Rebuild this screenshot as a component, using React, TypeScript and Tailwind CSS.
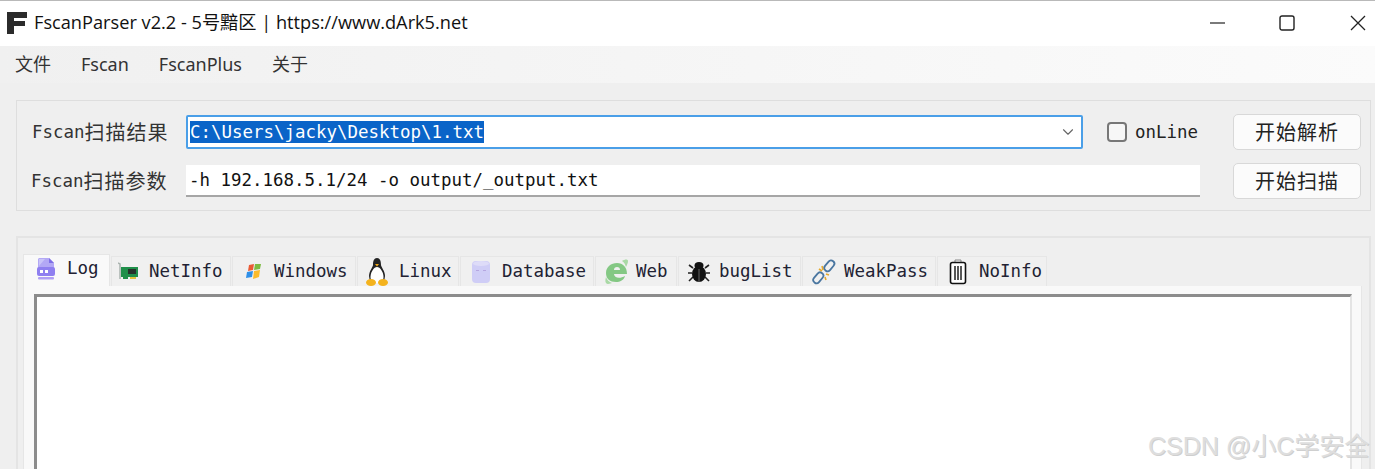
import type { ReactNode } from "react";
import { ChevronDown } from "lucide-react";

const mono = "font-['DejaVu_Sans_Mono','Noto_Sans_CJK_SC',monospace] text-[17.45px]";
const cjk = "font-['Noto_Sans_CJK_SC',sans-serif] text-[20px] tracking-[1px]";

function LogIcon() {
  return (
    <svg width="20" height="22" viewBox="0 0 20 22">
      <path d="M3 0h10l5 5v11H2V1z" fill="#b3a8f5" />
      <path d="M13 0l5 5h-5z" fill="#7f6fe6" />
      <path d="M3 1h6L3 8z" fill="#c9c4f8" />
      <rect x="1" y="9" width="18" height="9" rx="2" fill="#8f7ff0" />
      <rect x="4" y="12" width="3" height="3" fill="#fff" />
      <rect x="9" y="12" width="3" height="3" fill="#fff" />
      <rect x="2" y="19" width="16" height="2.5" rx="1" fill="#b09ff5" />
    </svg>
  );
}

function NetIcon() {
  return (
    <svg width="20" height="20" viewBox="0 0 20 20">
      <path d="M0 1l2 1v15" stroke="#a9b2ae" strokeWidth="1.5" fill="none" />
      <rect x="3" y="5" width="17" height="10" fill="#1f8f4a" />
      <rect x="10" y="7" width="8" height="5" fill="#26332c" />
      <rect x="5" y="15" width="5" height="2" fill="#1f8f4a" />
      <rect x="12" y="15" width="6" height="2" fill="#e2c23c" />
    </svg>
  );
}

function WindowsIcon() {
  return (
    <svg width="18" height="18" viewBox="0 0 18 18">
      <path d="M4 2l5-1-1 6-5 1z" fill="#ea5a35" />
      <path d="M10 1l6 0-1 5-6 1z" fill="#7dbb42" />
      <path d="M2 9l6-1-1 6-6 1z" fill="#2f8fe8" />
      <path d="M9 8l6-1-1 7-6 2z" fill="#fbbb2c" />
    </svg>
  );
}

function LinuxIcon() {
  return (
    <svg width="22" height="28" viewBox="0 0 22 28">
      <path d="M11 0c3 0 4 3 4 7 0 2 4 6 4 11l-1 6H4l-1-6c0-5 4-9 4-11 0-4 1-7 4-7z" fill="#232323" />
      <path d="M11 9c3 0 6.500 5 6.500 10 0 4-2.500 6-6.500 6s-6.500-2-6.500-6c0-5 3.500-10 6.500-10z" fill="#fff" />
      <path d="M9 6h4l-2 2.500z" fill="#f0a818" />
      <ellipse cx="5" cy="24.500" rx="5" ry="3.500" fill="#f4b31e" />
      <ellipse cx="17" cy="24.500" rx="5" ry="3.500" fill="#f4b31e" />
    </svg>
  );
}

function DatabaseIcon() {
  return (
    <svg width="20" height="24" viewBox="0 0 20 24">
      <rect x="1" y="1" width="18" height="22" rx="4" fill="#cfcdf6" />
      <ellipse cx="10" cy="3.500" rx="8" ry="2.500" fill="#dedcf8" />
      <rect x="5" y="10" width="3" height="1" fill="#b5a6e0" />
      <rect x="12" y="10" width="3" height="1" fill="#b5a6e0" />
    </svg>
  );
}

function WebIcon() {
  return (
    <svg width="24" height="26" viewBox="0 0 24 26">
      <path
        d="M1 14C1 8 6 4 12 4s10 4 10 11H9c0 4 6 5 11 2-1 4-5 6-9 6C5 23 1 20 1 14zm8-3h6c0-2-1-3-3-3s-3 1-3 3z"
        fill="#84c884"
      />
      <path d="M17 2c3-2 6-2 6 0s-1 4-2 6c-1-3-2-5-4-6zM1 18c-1 3-1 7 2 7 2 0 3-1 4-1-3-1-5-3-6-6z" fill="#a9d9a5" />
    </svg>
  );
}

function BugIcon() {
  return (
    <svg width="24" height="22" viewBox="0 0 24 22">
      <path
        d="M6 7L2 4M18 7l4-3M5 12H1M19 12h4M6 16l-4 4M18 16l4 4"
        stroke="#222"
        strokeWidth="1.6"
        fill="none"
      />
      <ellipse cx="12" cy="13" rx="7" ry="8" fill="#111" />
      <ellipse cx="12" cy="4.500" rx="4.500" ry="3.500" fill="#111" />
      <rect x="11.500" y="8" width="1" height="13" fill="#666" />
    </svg>
  );
}

function ChainIcon() {
  return (
    <svg width="26" height="26" viewBox="0 0 26 26">
      <g fill="none" stroke="#4a76a0" strokeWidth="1.8">
        <rect x="15" y="1" width="6.500" height="12" rx="3.200" transform="rotate(40 18.500 7)" />
        <rect x="4" y="13" width="6.500" height="12" rx="3.200" transform="rotate(40 7.500 19)" />
      </g>
      <path d="M11 7l1 4M8 10l3 2M15 15l3 1M14 18l1 3" stroke="#e6a92a" strokeWidth="1.6" />
    </svg>
  );
}

function TrashIcon() {
  return (
    <svg width="18" height="26" viewBox="0 0 18 26">
      <path d="M6 3V1h6v2" stroke="#888" strokeWidth="1" fill="none" />
      <rect x="1.500" y="3.500" width="15" height="21" rx="2" fill="#fff" stroke="#111" strokeWidth="1.6" />
      <path d="M6 7v14M9 7v14M12 7v14" stroke="#222" strokeWidth="1.500" />
    </svg>
  );
}

const tabs: { label: string; icon: ReactNode; width: string; gap: string; pad: string }[] = [
  { label: "NetInfo", icon: <NetIcon />, width: "w-[120px]", gap: "gap-[11px]", pad: "pl-[6px]" },
  { label: "Windows", icon: <WindowsIcon />, width: "w-[124px]", gap: "gap-[11px]", pad: "pl-[12px]" },
  { label: "Linux", icon: <LinuxIcon />, width: "w-[102px]", gap: "gap-[11px]", pad: "pl-[8px]" },
  { label: "Database", icon: <DatabaseIcon />, width: "w-[134px]", gap: "gap-[11px]", pad: "pl-[10px]" },
  { label: "Web", icon: <WebIcon />, width: "w-[82px]", gap: "gap-[7px]", pad: "pl-[9px]" },
  { label: "bugList", icon: <BugIcon />, width: "w-[123px]", gap: "gap-[8px]", pad: "pl-[8px]" },
  { label: "WeakPass", icon: <ChainIcon />, width: "w-[134px]", gap: "gap-[7px]", pad: "pl-[8px]" },
  { label: "NoInfo", icon: <TrashIcon />, width: "w-[110px]", gap: "gap-[12px]", pad: "pl-[11px]" },
];

function ActionButton({ label }: { label: string }) {
  return (
    <button className="w-[128px] h-[36px] bg-[#fbfbfb] border border-[#d8d8d8] rounded-[5px] text-[#222] text-[20px] leading-[32px] tracking-[1px] font-['Noto_Sans_CJK_SC',sans-serif]">
      {label}
    </button>
  );
}

function RowLabel({ text, className }: { text: string; className: string }) {
  return (
    <span className={`${mono} ${className} text-[#333] flex items-center`}>
      Fscan<span className={`${cjk} leading-[24px]`}>{text}</span>
    </span>
  );
}

export default function App() {
  return (
    <div className="relative w-[1375px] h-[469px] overflow-hidden bg-[#efefef] text-[#1b1b1b]">
      {/* title bar */}
      <div className="h-[46px] bg-white border-t border-[#b9b9b9] pb-[2px] flex items-center pl-[7px] font-['Open_Sans','Noto_Sans_CJK_SC',sans-serif]">
        <svg width="21" height="22" viewBox="0 0 21 22">
          <path d="M0 0h20v6H7v3h11v5H7v8H0z" fill="#2b2b2b" />
        </svg>
        <span className="ml-[6px] text-[18.2px] text-[#111]">FscanParser v2.2 - 5号黯区 | https://www.dArk5.net</span>
        <div className="ml-auto flex items-center">
          <svg width="16" height="16" viewBox="0 0 16 16" className="mr-[53px]">
            <path d="M0 8h15" stroke="#222" strokeWidth="1.2" />
          </svg>
          <svg width="16" height="16" viewBox="0 0 16 16" className="mr-[55px]">
            <rect x="1" y="1" width="14" height="14" rx="2" fill="none" stroke="#222" strokeWidth="1.4" />
          </svg>
          <svg width="16" height="16" viewBox="0 0 16 16" className="mr-[9px]">
            <path d="M1 1l14 14M15 1L1 15" stroke="#222" strokeWidth="1.3" />
          </svg>
        </div>
      </div>

      {/* menu bar */}
      <div className="h-[37px] flex items-center gap-[30px] pl-[15px] text-[18px] text-[#333] bg-gradient-to-r from-[#f0f0f0] to-[#fbfbfb] font-['Noto_Sans','Noto_Sans_CJK_SC',sans-serif]">
        <span>文件</span>
        <span>Fscan</span>
        <span>FscanPlus</span>
        <span>关于</span>
      </div>

      {/* scan settings */}
      <div className="ml-[16px] mr-[4px] mt-[17px] h-[111px] border border-[#dedede] pt-[13px] pl-[15px] pr-[9px] flex flex-col gap-[13px]">
        <div className="flex items-center h-[36px]">
          <RowLabel text="扫描结果" className="w-[154px]" />
          <div className="w-[897px] h-[34px] bg-white border-2 border-[#4a9fe8] rounded-[2px] flex items-center pl-[2px] pr-[4px]">
            <span className={`${mono} bg-[#0a64c8] text-white leading-[22px]`}>{"C:\\Users\\jacky\\Desktop\\1.txt"}</span>
            <ChevronDown className="ml-auto w-[18px] h-[18px] text-[#666]" strokeWidth={1.5} />
          </div>
          <div className="ml-[24px] w-[20px] h-[20px] border-2 border-[#777] rounded-[4px] bg-[#f7f7f7]" />
          <span className={`${mono} ml-[8px] text-[#222]`}>onLine</span>
          <div className="ml-auto">
            <ActionButton label="开始解析" />
          </div>
        </div>
        <div className="flex items-center h-[36px]">
          <RowLabel text="扫描参数" className="w-[155px] -ml-[1px]" />
          <div className="w-[1014px] h-[32px] bg-white border-b-2 border-[#a6a6a6] flex items-center pl-[3px]">
            <span className={`${mono} text-[#111]`}>-h 192.168.5.1/24 -o output/_output.txt</span>
          </div>
          <div className="ml-auto">
            <ActionButton label="开始扫描" />
          </div>
        </div>
      </div>

      {/* results */}
      <div className="ml-[16px] mr-[4px] mt-[25px] h-[240px] border-2 border-[#e4e4e4] pt-[16px] pl-[5px] pr-[7px]">
        <div className={`${mono} flex items-end h-[32px] text-[#223]`}>
          <div className="w-[87px] h-[32px] pb-[4px] bg-[#f9f9f9] border border-b-0 border-[#e6e6e6] flex items-center pl-[12px] gap-[11px] mr-[1px]">
            <LogIcon />
            <span>Log</span>
          </div>
          {tabs.map((tab) => (
            <div
              key={tab.label}
              className={`${tab.width} ${tab.gap} ${tab.pad} h-[30px] mr-[1px] bg-[#f0f0f0] border border-b-0 border-[#e6e6e6] flex items-center`}
            >
              {tab.icon}
              <span>{tab.label}</span>
            </div>
          ))}
        </div>
        <div className="h-[200px] bg-[#f9f9f9] border border-t-0 border-[#e6e6e6] pt-[8px] pl-[10px] pr-[9px]">
          <div className="h-[200px] bg-white border-t-[3px] border-l-[3px] border-r-2 border-t-[#8c8c8c] border-l-[#8c8c8c] border-r-[#e4e4e4]" />
        </div>
      </div>

      {/* watermark */}
      <span className="absolute left-[1148px] top-[431px] text-[25px] leading-[30px] text-[#dedede] [text-shadow:1px_1px_0_#cfcfcf] font-['Liberation_Sans','Noto_Sans_CJK_SC',sans-serif]">
        CSDN @小C学安全
      </span>
    </div>
  );
}
